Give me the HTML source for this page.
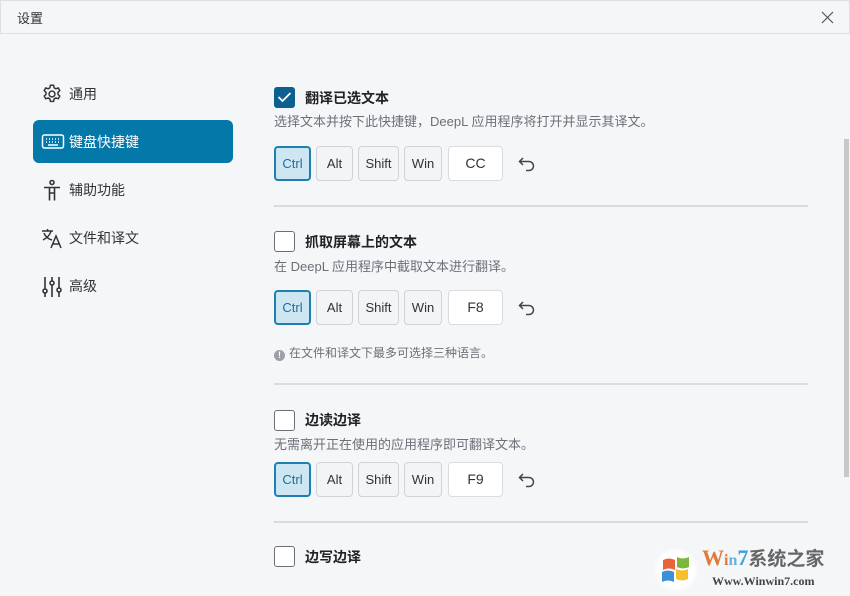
<!DOCTYPE html>
<html><head><meta charset="utf-8"><style>
*{margin:0;padding:0;box-sizing:border-box}
body{width:850px;height:596px;overflow:hidden;background:#f5f6f8;font-family:"Liberation Sans","Noto Sans CJK SC",sans-serif;color:#222;position:relative}
.abs{position:absolute}
.title{left:0;top:0;width:850px;height:34px;border-bottom:1px solid #dcdfe3;border-top:1px solid #dcdfe3;border-left:1px solid #dcdfe3;border-right:1px solid #dcdfe3}
.title span{position:absolute;left:16px;top:7px;font-size:13px;color:#333}
.nav{left:33px;width:200px;height:43px;border-radius:6px;font-size:14px;color:#333}
.nav span{position:absolute;left:36px;top:12px}
.nav svg{position:absolute;left:8px;top:11px}
.sel{background:#0478a9;color:#fff}
.cb{left:274px;width:21px;height:21px;border:1.5px solid #6b6f75;border-radius:3px;background:#fff}
.cb.on{background:#0c5f8e;border-color:#0c5f8e}
.h{left:305px;font-size:14px;font-weight:bold;color:#222}
.d{left:274px;font-size:13px;color:#6b7078}
.k{height:35px;border:1px solid #cfd3d8;border-radius:4px;background:#f3f4f6;font-size:13px;color:#333;text-align:center;line-height:33px}
.k.a{background:#cde6f2;border:2px solid #1f7fae;color:#1f6f99;line-height:31px}
.k.v{background:#fff;border-color:#d8dbdf;font-size:14px}
.hr{left:274px;width:534px;height:2px;background:#d9dcdf}
</style></head><body>
<div class="abs title"><span>设置</span>
<svg class="abs" style="left:820px;top:10px" width="13" height="13" viewBox="0 0 13 13"><path d="M1 1L12 12M12 1L1 12" stroke="#555" stroke-width="1.2"/></svg></div>
<div class="abs" style="left:844px;top:139px;width:5px;height:338px;background:#c8c8c8"></div>

<div class="abs nav" style="top:72px"><svg width="22" height="22" viewBox="0 0 24 24" fill="none" stroke="#333" stroke-width="1.6"><circle cx="12" cy="12" r="3.2"/><path d="M10.3 2.5h3.4l.6 2.7 1.9 1.1 2.6-.9 1.7 2.9-2 1.9v2.2l2 1.8-1.7 3-2.6-.9-1.9 1.1-.6 2.7h-3.4l-.6-2.7-1.9-1.1-2.6.9-1.7-3 2-1.8v-2.2l-2-1.9 1.7-2.9 2.6.9 1.9-1.1z"/></svg><span>通用</span></div>
<div class="abs nav sel" style="top:120px"><svg width="24" height="22" viewBox="0 0 24 22" fill="none" stroke="#fff" stroke-width="1.5"><rect x="1.5" y="4" width="21" height="13" rx="2"/><path d="M5 8h1M8 8h1M11 8h1M14 8h1M17 8h1M5 11h1M8 11h1M11 11h1M14 11h1M17 11h1M7 14h10"/></svg><span>键盘快捷键</span></div>
<div class="abs nav" style="top:168px"><svg width="22" height="24" viewBox="0 0 22 24" fill="none" stroke="#333" stroke-width="1.6"><circle cx="11" cy="3.5" r="2"/><path d="M3 8.5h16M8.5 8.5v13M13.5 8.5v13M8.5 14h5"/></svg><span>辅助功能</span></div>
<div class="abs nav" style="top:216px"><svg width="22" height="22" viewBox="0 0 22 22" fill="none" stroke="#333" stroke-width="1.5"><path d="M1 4h11M6.5 2v2M3 6c1.5 4 4 6 8 7M10 4c-1 4-4 7-8 9M10 21l5-12 5 12M12 17h6"/></svg><span>文件和译文</span></div>
<div class="abs nav" style="top:264px"><svg width="22" height="22" viewBox="0 0 22 22" fill="none" stroke="#333" stroke-width="1.6"><path d="M4 2v20M11 2v20M18 2v20"/><circle cx="4" cy="16" r="2" fill="#f5f6f8"/><circle cx="11" cy="8" r="2" fill="#f5f6f8"/><circle cx="18" cy="15" r="2" fill="#f5f6f8"/></svg><span>高级</span></div>

<div class="abs cb on" style="top:87px"><svg class="abs" style="left:2px;top:3px" width="15" height="12" viewBox="0 0 15 12"><path d="M1.5 6l4 4 8-8" stroke="#fff" stroke-width="1.8" fill="none"/></svg></div>
<div class="abs h" style="top:88px">翻译已选文本</div>
<div class="abs d" style="top:111px">选择文本并按下此快捷键，DeepL 应用程序将打开并显示其译文。</div>

<div class="abs hr" style="top:205px"></div>
<div class="abs cb" style="top:231px"></div>
<div class="abs h" style="top:232px">抓取屏幕上的文本</div>
<div class="abs d" style="top:256px">在 DeepL 应用程序中截取文本进行翻译。</div>
<div class="abs d" style="top:344px;font-size:12px"><span style="display:inline-block;width:11px;height:11px;border-radius:50%;background:#9aa0a6;color:#fff;font-size:9px;text-align:center;line-height:11px;font-weight:bold;vertical-align:-1px;margin-right:4px">!</span>在文件和译文下最多可选择三种语言。</div>

<div class="abs hr" style="top:383px"></div>
<div class="abs cb" style="top:410px"></div>
<div class="abs h" style="top:410px">边读边译</div>
<div class="abs d" style="top:434px">无需离开正在使用的应用程序即可翻译文本。</div>

<div class="abs hr" style="top:521px"></div>
<div class="abs cb" style="top:546px"></div>
<div class="abs h" style="top:547px">边写边译</div>

<div class="abs" style="top:146px;left:0">
<div class="abs k a" style="left:274px;width:37px">Ctrl</div><div class="abs k" style="left:316px;width:37px">Alt</div><div class="abs k" style="left:358px;width:41px">Shift</div><div class="abs k" style="left:404px;width:38px">Win</div><div class="abs k v" style="left:448px;width:55px">CC</div>
<svg class="abs" style="left:518px;top:10px" width="18" height="16" viewBox="0 0 18 16" fill="none" stroke="#444" stroke-width="1.5"><path d="M5 2L1.5 5.5 5 9M1.5 5.5H11a4.5 4.5 0 0 1 0 9H8"/></svg></div>
<div class="abs" style="top:290px;left:0">
<div class="abs k a" style="left:274px;width:37px">Ctrl</div><div class="abs k" style="left:316px;width:37px">Alt</div><div class="abs k" style="left:358px;width:41px">Shift</div><div class="abs k" style="left:404px;width:38px">Win</div><div class="abs k v" style="left:448px;width:55px">F8</div>
<svg class="abs" style="left:518px;top:10px" width="18" height="16" viewBox="0 0 18 16" fill="none" stroke="#444" stroke-width="1.5"><path d="M5 2L1.5 5.5 5 9M1.5 5.5H11a4.5 4.5 0 0 1 0 9H8"/></svg></div>
<div class="abs" style="top:462px;left:0">
<div class="abs k a" style="left:274px;width:37px">Ctrl</div><div class="abs k" style="left:316px;width:37px">Alt</div><div class="abs k" style="left:358px;width:41px">Shift</div><div class="abs k" style="left:404px;width:38px">Win</div><div class="abs k v" style="left:448px;width:55px">F9</div>
<svg class="abs" style="left:518px;top:10px" width="18" height="16" viewBox="0 0 18 16" fill="none" stroke="#444" stroke-width="1.5"><path d="M5 2L1.5 5.5 5 9M1.5 5.5H11a4.5 4.5 0 0 1 0 9H8"/></svg></div>

<div class="abs" style="left:652px;top:546px;width:48px;height:48px;border-radius:50%;background:radial-gradient(circle,#fff 50%,#e3e6ea 100%)">
<svg class="abs" style="left:9px;top:10px" width="30" height="28" viewBox="0 0 30 28"><path d="M2 4q6-3 12 0v10q-6-3-12 0z" fill="#e8633a"/><path d="M16 1q6 3 12 0v10q-6 3-12 0z" fill="#7cb63a"/><path d="M1 16q6-3 12 0v10q-6-3-12 0z" fill="#3d8fd8"/><path d="M15 13q6 3 12 0v10q-6 3-12 0z" fill="#f4c02d"/></svg></div>
<div class="abs" style="left:702px;top:546px;font-family:'Liberation Serif',serif;font-weight:bold;font-size:22px;line-height:24px"><span style="color:#e07a3a">W</span><span style="color:#e07a3a;font-size:16px">i</span><span style="color:#6ab0d8;font-size:16px">n</span><span style="color:#3aa0d8">7</span><span style="color:#666;font-family:'Noto Sans CJK SC',sans-serif;font-size:19px">系统之家</span></div>
<div class="abs" style="left:712px;top:574px;font-family:'Liberation Serif',serif;font-weight:bold;font-size:12px;color:#444">Www.Winwin7.com</div>
</body></html>
